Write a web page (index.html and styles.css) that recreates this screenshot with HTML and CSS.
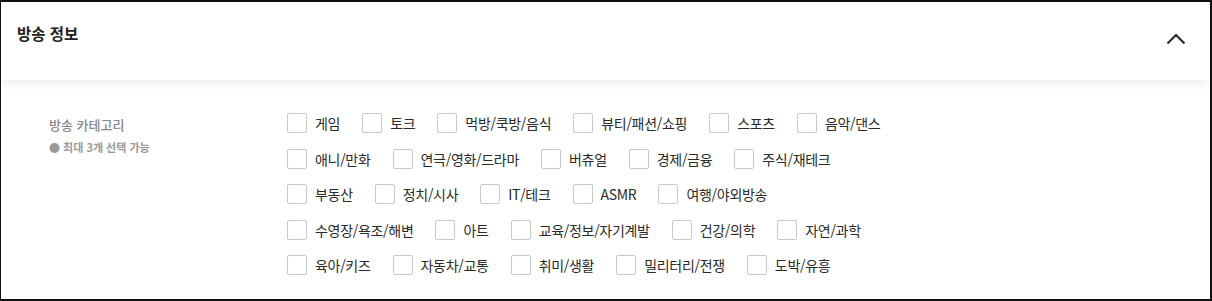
FILE: index.html
```html
<!DOCTYPE html>
<html lang="ko">
<head>
    <meta charset="UTF-8" />
    <title>방송 정보</title>
    <meta name="viewport" content="width=device-width, initial-scale=1.0" />
    <link rel="stylesheet" href="styles.css">
</head>
<body>

<div class="panel">
    <div class="panel-head">
        <h2>방송 정보</h2>
        <button class="toggle" type="button" aria-label="접기">
            <svg width="20" height="12" viewBox="0 0 20 12">
                <polyline points="1.5,10.5 10,2 18.5,10.5" fill="none" stroke="#2b2b2b" stroke-width="2.2" />
            </svg>
        </button>
    </div>

    <div class="panel-body">
        <div class="field-label">
            <p class="label">방송 카테고리</p>
            <p class="hint">● 최대 3개 선택 가능</p>
        </div>
        <div class="options">
            <label class="check"><input type="checkbox" /><span class="box"></span>게임</label>
            <label class="check"><input type="checkbox" /><span class="box"></span>토크</label>
            <label class="check"><input type="checkbox" /><span class="box"></span>먹방/쿡방/음식</label>
            <label class="check"><input type="checkbox" /><span class="box"></span>뷰티/패션/쇼핑</label>
            <label class="check"><input type="checkbox" /><span class="box"></span>스포츠</label>
            <label class="check"><input type="checkbox" /><span class="box"></span>음악/댄스</label>
            <label class="check"><input type="checkbox" /><span class="box"></span>애니/만화</label>
            <label class="check"><input type="checkbox" /><span class="box"></span>연극/영화/드라마</label>
            <label class="check"><input type="checkbox" /><span class="box"></span>버츄얼</label>
            <label class="check"><input type="checkbox" /><span class="box"></span>경제/금융</label>
            <label class="check"><input type="checkbox" /><span class="box"></span>주식/재테크</label>
            <label class="check"><input type="checkbox" /><span class="box"></span>부동산</label>
            <label class="check"><input type="checkbox" /><span class="box"></span>정치/시사</label>
            <label class="check"><input type="checkbox" /><span class="box"></span>IT/테크</label>
            <label class="check"><input type="checkbox" /><span class="box"></span>ASMR</label>
            <label class="check"><input type="checkbox" /><span class="box"></span>여행/야외방송</label>
            <label class="check"><input type="checkbox" /><span class="box"></span>수영장/욕조/해변</label>
            <label class="check"><input type="checkbox" /><span class="box"></span>아트</label>
            <label class="check"><input type="checkbox" /><span class="box"></span>교육/정보/자기계발</label>
            <label class="check"><input type="checkbox" /><span class="box"></span>건강/의학</label>
            <label class="check"><input type="checkbox" /><span class="box"></span>자연/과학</label>
            <label class="check"><input type="checkbox" /><span class="box"></span>육아/키즈</label>
            <label class="check"><input type="checkbox" /><span class="box"></span>자동차/교통</label>
            <label class="check"><input type="checkbox" /><span class="box"></span>취미/생활</label>
            <label class="check"><input type="checkbox" /><span class="box"></span>밀리터리/전쟁</label>
            <label class="check"><input type="checkbox" /><span class="box"></span>도박/유흥</label>
        </div>
    </div>
</div>

</body>
</html>
```

FILE: styles.css
```css
* {
  box-sizing: border-box;
}
body {
  margin: 0;
  font-family: "Noto Sans CJK KR", "Noto Sans", sans-serif;
  background: #fff;
}
.panel {
  height: 301px;
  border: 2px solid #111;
  border-left-width: 1px;
  overflow: hidden;
}
.panel-head {
  position: relative;
  z-index: 1;
  height: 78px;
  display: flex;
  justify-content: space-between;
  align-items: flex-start;
  padding: 21px 24px 0 16px;
  background: #fff;
  box-shadow: 0 4px 10px rgba(0, 0, 0, 0.07);
}
.panel-head h2 {
  margin: 0;
  font-size: 15.5px;
  line-height: 20px;
  font-weight: bold;
  color: #222;
}
.toggle {
  margin-top: 10px;
  padding: 0;
  border: none;
  background: none;
  cursor: pointer;
  line-height: 0;
}
.panel-body {
  display: flex;
  padding: 33px 0 0 48px;
}
.field-label {
  width: 238px;
  flex-shrink: 0;
}
.label {
  margin: 2px 0 0;
  font-size: 13px;
  line-height: 20px;
  color: #888;
  font-weight: 500;
}
.hint {
  margin: 4px 0 0;
  font-size: 11px;
  line-height: 16px;
  color: #999;
  font-weight: bold;
}
.options {
  width: 605px;
  display: flex;
  flex-wrap: wrap;
  column-gap: 22px;
  row-gap: 15.5px;
}
.check {
  display: flex;
  align-items: center;
  gap: 8px;
  height: 20px;
  font-size: 14px;
  letter-spacing: -0.3px;
  color: #2a2a2a;
  cursor: pointer;
}
.check input {
  display: none;
}
.box {
  width: 20px;
  height: 20px;
  border: 1px solid #c8c8c8;
  border-radius: 2px;
  background: #fff;
}
```
